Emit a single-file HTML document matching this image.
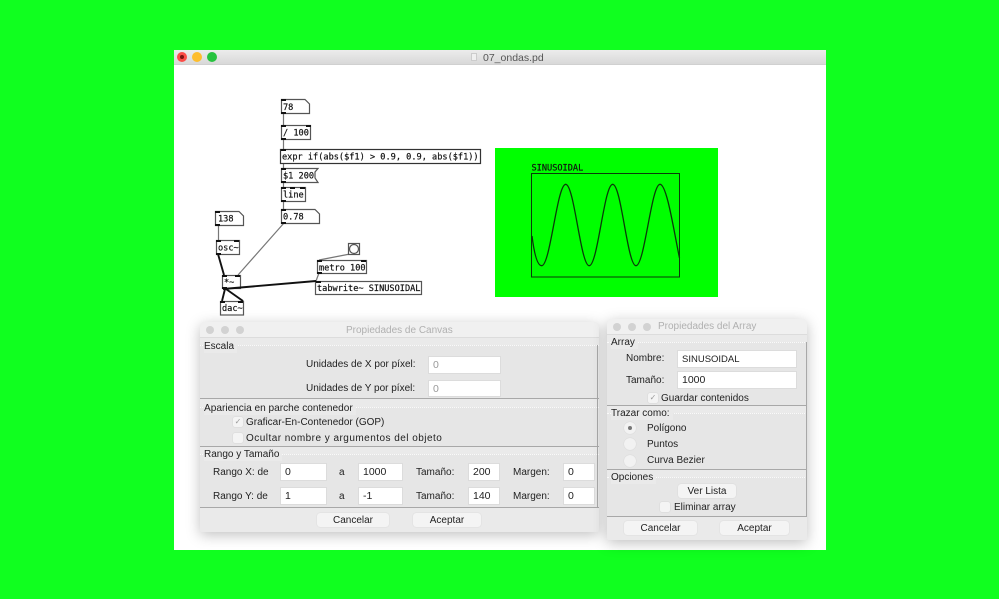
<!DOCTYPE html>
<html><head><meta charset="utf-8"><title>07_ondas.pd</title>
<style>
html,body{margin:0;padding:0;width:999px;height:599px;overflow:hidden;background:#10ff1f;font-family:"Liberation Sans",sans-serif;color:#2a2a2a}
#w{position:absolute;left:0;top:0;width:999px;height:599px;filter:blur(.35px)}
#w div{position:absolute;box-sizing:border-box}
#w .t{font-size:10px;line-height:12px;white-space:nowrap;color:#222;margin-top:1px}
#w .f{background:#fff;border:1px solid #dcdcdc;font-size:10.5px;line-height:17px;padding-left:4px;color:#222}
#w .b{background:#f4f4f4;border-radius:3px;box-shadow:0 0 1px #c4c4c4;font-size:10px;line-height:15px;text-align:center;color:#222}
#w .g{background:#e6e6e6;border-bottom:1px solid #a8a8a8;border-top:1px dotted #fafafa}
#w .c{width:10px;height:10px;background:#f4f4f4;border-radius:2px;box-shadow:0 0 1px #bbb;font-size:8px;line-height:10px;text-align:center;color:#999}
#w .r{width:12px;height:12px;background:#f2f2f2;border-radius:50%;box-shadow:0 0 1px #c4c4c4}
#w .d{border-radius:50%;width:8px;height:8px;background:#d2d2d2}
#w .dlg{background:#eaeaea;border-radius:5px 5px 2px 2px;box-shadow:0 3px 14px rgba(0,0,0,.25)}
#w .ti{font-size:10px;line-height:14px;color:#b0b0b0;white-space:nowrap}
#w .l{background:#eaeaea;padding-right:3px}
</style></head><body><div id="w">
<div style="left:174px;top:50px;width:652px;height:500px;background:#fff"></div>
<div style="left:174px;top:50px;width:652px;height:15px;background:linear-gradient(#ececec,#d8d8d8);border-bottom:1px solid #d0d0d0"></div>
<div style="left:177px;top:52px;width:10px;height:10px;border-radius:50%;background:#fc4d48"></div>
<div style="left:180px;top:55px;width:4px;height:4px;border-radius:50%;background:#7a1512"></div>
<div style="left:192px;top:52px;width:10px;height:10px;border-radius:50%;background:#fdbd2c"></div>
<div style="left:207px;top:52px;width:10px;height:10px;border-radius:50%;background:#27c33f"></div>
<div style="left:471px;top:53px;width:6px;height:8px;background:#f0f0f0;border:1px solid #ccc"></div>
<div class="t" style="left:483px;top:51px;font-size:10.500px;color:#555">07_ondas.pd</div>

<div style="left:495px;top:148px;width:223px;height:149px;background:#00ff00"></div>

<svg style="position:absolute;left:0;top:0" width="999" height="599" viewBox="0 0 999 599" font-family="'DejaVu Sans Mono',monospace" font-size="8.6" fill="#111" stroke="none">
<g stroke="#777" stroke-width="1.200" fill="none">
<path d="M283.500 113V125M283.500 139V149M283.500 163V168M283.500 182V187M283.500 201V209"/>
<path d="M218.500 225V240M284 223L238 275M350 254L319 260M319 273L316 281"/>
</g>
<g stroke="#555" stroke-width="1.200" fill="#fff">
<path d="M281.500 99.500H305L309.500 104V113.500H281.500Z"/>
<rect x="281.500" y="125.500" width="29" height="14"/>
<rect x="280.500" y="149.500" width="200" height="14" stroke="#333"/>
<path d="M281.500 168.500H318L315 172V178L318 182.500H281.500Z"/>
<rect x="281.500" y="187.500" width="24" height="14"/>
<path d="M281.500 209.500H315L319.500 214V223.500H281.500Z"/>
<path d="M215.500 211.500H239L243.500 216V225.500H215.500Z"/>
<rect x="216.500" y="240.500" width="23" height="14"/>
<rect x="222.500" y="275.500" width="18" height="13"/>
<rect x="220.500" y="301.500" width="23" height="13.500"/>
<rect x="348.500" y="243.500" width="11" height="11"/>
<rect x="317.500" y="260.500" width="49" height="13"/>
<rect x="315.500" y="281.500" width="106" height="13"/>
</g>
<g stroke="#111" stroke-width="1.900" fill="none">
<path d="M218 254L224 275M225 289L222 301M226 289L243 301M223 289L316 281"/>
</g>
<circle cx="354" cy="249" r="4.500" fill="#fff" stroke="#555" stroke-width="1.200"/>
<g fill="#111" stroke="none">
<rect x="281" y="99" width="5" height="2"/><rect x="281" y="112" width="5" height="2"/>
<rect x="281" y="125" width="5" height="2"/><rect x="306" y="125" width="5" height="2"/><rect x="281" y="138" width="5" height="2"/>
<rect x="281" y="149" width="5" height="2"/>
<rect x="281" y="168" width="5" height="2"/><rect x="281" y="181" width="5" height="2"/>
<rect x="281" y="187" width="5" height="2"/><rect x="290" y="187" width="5" height="2"/><rect x="300" y="187" width="5" height="2"/><rect x="281" y="200" width="5" height="2"/>
<rect x="281" y="209" width="5" height="2"/><rect x="281" y="222" width="5" height="2"/>
<rect x="215" y="211" width="5" height="2"/><rect x="215" y="224" width="5" height="2"/>
<rect x="216" y="240" width="5" height="2"/><rect x="234" y="240" width="5" height="2"/><rect x="216" y="253" width="5" height="2"/>
<rect x="222" y="275" width="5" height="2"/><rect x="235" y="275" width="5" height="2"/><rect x="222" y="287" width="5" height="2"/>
<rect x="220" y="301" width="5" height="2"/><rect x="238" y="301" width="5" height="2"/>
<rect x="317" y="260" width="5" height="2"/><rect x="361" y="260" width="5" height="2"/><rect x="317" y="272" width="5" height="2"/>
<rect x="316" y="281" width="5" height="2"/>
</g>
<g stroke="#111" stroke-width=".2">
<text x="283" y="110">78</text>
<text x="283" y="135.500">/ 100</text>
<text x="282" y="159.500">expr if(abs($f1) &gt; 0.9, 0.9, abs($f1))</text>
<text x="283" y="178.500">$1 200</text>
<text x="283" y="197.500">line</text>
<text x="283" y="219.500">0.78</text>
<text x="218" y="221.500">138</text>
<text x="218" y="250.500">osc~</text>
<text x="224" y="285">*~</text>
<text x="222" y="311">dac~</text>
<text x="319" y="270.500">metro 100</text>
<text x="317" y="291">tabwrite~ SINUSOIDAL</text>
<text x="531.500" y="170.500">SINUSOIDAL</text>
</g>
<rect x="531.500" y="173.500" width="148" height="103.500" fill="none" stroke="#0a3a0a" stroke-width="1"/>
<path fill="none" stroke="#0a3a0a" stroke-width="1.300" d="M532 236C534 252 537 265.700 541.700 265.700C550.300 265.700 557.100 184.300 565.700 184.300C574.300 184.300 580.600 265.700 589.200 265.700C597.800 265.700 604.100 184.300 612.700 184.300C621.300 184.300 627.400 265.700 636 265.700C644.600 265.700 651.400 184.300 660 184.300C667 184.300 674 232 679.500 258"/>
</svg>

<!-- Canvas dialog -->
<div class="dlg" style="left:200px;top:322px;width:399px;height:210px">
<div style="left:0;top:0;width:399px;height:16px;background:#f0f0f0;border-bottom:1px solid #dcdcdc;border-radius:5px 5px 0 0"></div>
<div class="d" style="left:6px;top:4px"></div><div class="d" style="left:21px;top:4px"></div><div class="d" style="left:36px;top:4px"></div>
<div class="ti" style="left:146px;top:2px">Propiedades de Canvas</div>
<div class="g" style="left:0;top:23px;width:399px;height:54px"></div>
<div class="g" style="left:0;top:85px;width:399px;height:40px"></div>
<div class="g" style="left:0;top:132px;width:399px;height:54px"></div>
</div>
<div style="left:597px;top:345px;width:1px;height:163px;background:#a8a8a8"></div>
<div class="t l" style="left:204px;top:340px">Escala</div>
<div class="t" style="left:306px;top:358px">Unidades de X por píxel:</div>
<div class="t" style="left:306px;top:382px">Unidades de Y por píxel:</div>
<div class="f" style="left:428px;top:356px;width:73px;height:18px;color:#999">0</div>
<div class="f" style="left:428px;top:380px;width:73px;height:17px;color:#999">0</div>
<div class="t l" style="left:204px;top:402px;font-size:10.100px">Apariencia en parche contenedor</div>
<div class="c" style="left:233px;top:417px">✓</div>
<div class="t" style="left:246px;top:416px">Graficar-En-Contenedor (GOP)</div>
<div class="c" style="left:233px;top:433px"></div>
<div class="t" style="left:246px;top:432px;letter-spacing:.47px">Ocultar nombre y argumentos del objeto</div>
<div class="t l" style="left:204px;top:448px">Rango y Tamaño</div>
<div class="t" style="left:213px;top:466px">Rango X: de</div>
<div class="t" style="left:213px;top:490px">Rango Y: de</div>
<div class="f" style="left:280px;top:463px;width:47px;height:18px">0</div>
<div class="f" style="left:280px;top:487px;width:47px;height:18px">1</div>
<div class="t" style="left:339px;top:466px">a</div><div class="t" style="left:339px;top:490px">a</div>
<div class="f" style="left:358px;top:463px;width:45px;height:18px">1000</div>
<div class="f" style="left:358px;top:487px;width:45px;height:18px">-1</div>
<div class="t" style="left:416px;top:466px">Tamaño:</div><div class="t" style="left:416px;top:490px">Tamaño:</div>
<div class="f" style="left:468px;top:463px;width:32px;height:18px">200</div>
<div class="f" style="left:468px;top:487px;width:32px;height:18px">140</div>
<div class="t" style="left:513px;top:466px">Margen:</div><div class="t" style="left:513px;top:490px">Margen:</div>
<div class="f" style="left:563px;top:463px;width:32px;height:18px">0</div>
<div class="f" style="left:563px;top:487px;width:32px;height:18px">0</div>
<div class="b" style="left:317px;top:513px;width:72px;height:14px">Cancelar</div>
<div class="b" style="left:413px;top:513px;width:68px;height:14px">Aceptar</div>

<!-- Array dialog -->
<div class="dlg" style="left:607px;top:319px;width:200px;height:221px">
<div style="left:0;top:0;width:200px;height:16px;background:#f0f0f0;border-bottom:1px solid #dcdcdc;border-radius:5px 5px 0 0"></div>
<div class="d" style="left:6px;top:4px"></div><div class="d" style="left:21px;top:4px"></div><div class="d" style="left:36px;top:4px"></div>
<div class="ti" style="left:51px;top:1px">Propiedades del Array</div>
<div class="g" style="left:0;top:23px;width:200px;height:64px"></div>
<div class="g" style="left:0;top:94px;width:200px;height:57px"></div>
<div class="g" style="left:0;top:158px;width:200px;height:40px"></div>
</div>
<div style="left:806px;top:342px;width:1px;height:175px;background:#a8a8a8"></div>
<div class="t l" style="left:611px;top:336px">Array</div>
<div class="t" style="left:626px;top:352px">Nombre:</div>
<div class="t" style="left:626px;top:374px">Tamaño:</div>
<div class="f" style="left:677px;top:350px;width:120px;height:18px;font-size:9.500px">SINUSOIDAL</div>
<div class="f" style="left:677px;top:371px;width:120px;height:18px">1000</div>
<div class="c" style="left:648px;top:393px">✓</div>
<div class="t" style="left:661px;top:392px">Guardar contenidos</div>
<div class="t l" style="left:611px;top:407px">Trazar como:</div>
<div class="r" style="left:624px;top:422px"></div>
<div style="left:628px;top:426px;width:4px;height:4px;border-radius:50%;background:#777"></div>
<div class="t" style="left:647px;top:422px">Polígono</div>
<div class="r" style="left:624px;top:438px"></div>
<div class="t" style="left:647px;top:438px">Puntos</div>
<div class="r" style="left:624px;top:455px"></div>
<div class="t" style="left:647px;top:454px">Curva Bezier</div>
<div class="t l" style="left:611px;top:471px">Opciones</div>
<div class="b" style="left:678px;top:484px;width:58px;height:14px">Ver Lista</div>
<div class="c" style="left:660px;top:502px"></div>
<div class="t" style="left:674px;top:501px">Eliminar array</div>
<div class="b" style="left:624px;top:521px;width:73px;height:14px">Cancelar</div>
<div class="b" style="left:720px;top:521px;width:69px;height:14px">Aceptar</div>
</div></body></html>
